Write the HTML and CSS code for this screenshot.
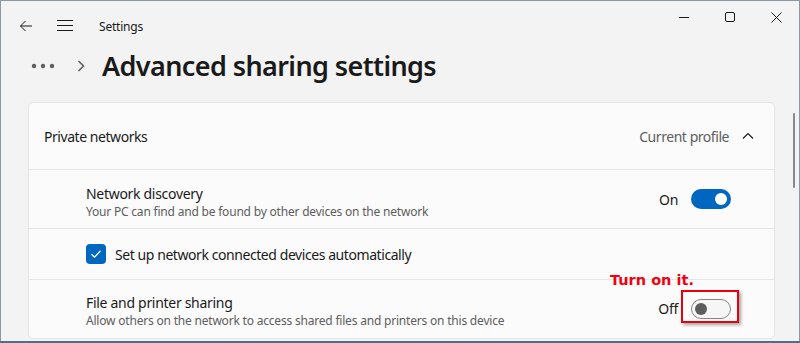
FILE: index.html
```html
<!DOCTYPE html>
<html lang="en">

<head>
    <meta charset="UTF-8">
    <meta name="viewport" content="width=device-width, initial-scale=1.0">
    <title>Settings</title>
    <link rel="stylesheet" href="styles.css">
</head>

<body>
    <div class="window">
        <header class="titlebar">
            <div class="nav">
                <svg class="nav-icon" width="16" height="16" viewBox="0 0 16 16">
                    <path d="M14 8H2.5M7.5 3L2.5 8l5 5" fill="none" stroke="#1a1a1a" stroke-width="1" />
                </svg>
                <svg class="nav-icon menu" width="16" height="12" viewBox="0 0 16 12">
                    <path d="M0 .5h16M0 5.5h16M0 10.5h16" fill="none" stroke="#1a1a1a" stroke-width="1" />
                </svg>
                <span class="app-name">Settings</span>
            </div>
            <div class="controls">
                <button class="ctrl">
                    <svg width="10" height="10" viewBox="0 0 10 10">
                        <path d="M0 5.5h10" stroke="#1a1a1a" stroke-width="1" />
                    </svg>
                </button>
                <button class="ctrl">
                    <svg width="10" height="10" viewBox="0 0 10 10">
                        <rect x=".5" y=".5" width="9" height="9" rx="1.5" fill="none" stroke="#1a1a1a" stroke-width="1" />
                    </svg>
                </button>
                <button class="ctrl">
                    <svg width="11" height="11" viewBox="0 0 11 11">
                        <path d="M.5.5l10 10M10.5.5l-10 10" stroke="#1a1a1a" stroke-width="1" />
                    </svg>
                </button>
            </div>
        </header>

        <div class="breadcrumb">
            <svg width="24" height="6" viewBox="0 0 24 6">
                <circle cx="3" cy="3" r="2.2" fill="#5f5f5f" />
                <circle cx="12" cy="3" r="2.2" fill="#5f5f5f" />
                <circle cx="21" cy="3" r="2.2" fill="#5f5f5f" />
            </svg>
            <svg class="crumb-chevron" width="8" height="12" viewBox="0 0 8 12">
                <path d="M1.5 1l5 5-5 5" fill="none" stroke="#5f5f5f" stroke-width="1.6" />
            </svg>
            <h1>Advanced sharing settings</h1>
        </div>

        <section class="card">
            <div class="card-header">
                <span class="header-title">Private networks</span>
                <span class="header-status">Current profile</span>
                <svg class="header-chevron" width="12" height="8" viewBox="0 0 12 8">
                    <path d="M1 6.5l5-5 5 5" fill="none" stroke="#1a1a1a" stroke-width="1.2" />
                </svg>
            </div>

            <div class="setting">
                <div class="setting-text">
                    <div class="setting-title">Network discovery</div>
                    <div class="setting-desc">Your PC can find and be found by other devices on the network</div>
                </div>
                <span class="state">On</span>
                <span class="toggle on"><span class="knob"></span></span>
            </div>

            <div class="setting check-row">
                <span class="checkbox">
                    <svg width="12" height="10" viewBox="0 0 12 10">
                        <path d="M1.5 5.2l3 3 6-6.5" fill="none" stroke="#fff" stroke-width="1.3" />
                    </svg>
                </span>
                <span class="check-label">Set up network connected devices automatically</span>
            </div>

            <div class="setting">
                <div class="setting-text">
                    <div class="setting-title">File and printer sharing</div>
                    <div class="setting-desc">Allow others on the network to access shared files and printers on this device</div>
                </div>
                <span class="state">Off</span>
                <span class="toggle-wrap">
                    <span class="note">Turn on it.</span>
                    <span class="toggle off"><span class="knob"></span></span>
                    <span class="highlight"></span>
                </span>
            </div>
        </section>

        <div class="scrollbar"></div>
    </div>
</body>

</html>
```

FILE: styles.css
```css
* {
    box-sizing: border-box;
    margin: 0;
    padding: 0;
}

body {
    width: 800px;
    height: 343px;
    overflow: hidden;
    background-color: #4f6f8c;
    font-family: "Noto Sans", "Open Sans", sans-serif;
    color: #1a1a1a;
}

.window {
    position: relative;
    height: 341px;
    background-color: #f3f3f3;
    border: 1px solid #8d9aa6;
    border-bottom: none;
    display: flex;
    flex-direction: column;
}

/* title bar */
.titlebar {
    height: 46px;
    display: flex;
    justify-content: space-between;
}

.nav {
    display: flex;
    align-items: center;
    padding-top: 4px;
    padding-left: 17px;
}

.nav-icon {
    display: block;
}

.menu {
    margin-left: 23px;
}

.app-name {
    margin-left: 26px;
    font-size: 12px;
    letter-spacing: -0.2px;
}

.controls {
    display: flex;
    height: 32px;
}

.ctrl {
    width: 46px;
    height: 32px;
    border: none;
    background: none;
    display: flex;
    align-items: center;
    justify-content: center;
}

/* breadcrumb */
.breadcrumb {
    height: 38px;
    display: flex;
    align-items: center;
    padding-left: 30px;
}

.crumb-chevron {
    margin-left: 22px;
}

.breadcrumb h1 {
    margin-left: 17px;
    font-size: 27px;
    font-weight: 600;
    letter-spacing: -0.6px;
    line-height: 38px;
    margin-top: -1px;
}

/* card */
.card {
    margin: 17px 24px 0 27px;
    background-color: #fbfbfb;
    border: 1px solid #e5e5e5;
    border-radius: 5px;
    flex: 1;
    margin-bottom: 2px;
}

.card-header {
    height: 67px;
    display: flex;
    align-items: center;
    padding: 0 20px 0 15px;
    border-bottom: 1px solid #e5e5e5;
    font-size: 14px;
}

.header-title {
    flex: 1;
    letter-spacing: -0.45px;
}

.header-status {
    color: #5d5d5d;
    letter-spacing: -0.45px;
}

.header-chevron {
    margin-left: 13px;
}

.setting {
    display: flex;
    align-items: center;
    padding: 0 43px 0 57px;
    height: 59px;
    border-bottom: 1px solid #e5e5e5;
}

.setting:last-child {
    border-bottom: none;
    height: 57px;
}

.setting-text {
    flex: 1;
    padding-top: 5px;
}

.setting-title {
    font-size: 14px;
    letter-spacing: -0.3px;
    line-height: 19px;
}

.setting-desc {
    font-size: 12px;
    color: #5d5d5d;
    letter-spacing: -0.2px;
    line-height: 17px;
}

.state {
    font-size: 14px;
    margin-right: 13px;
    margin-left: 10px;
    letter-spacing: -0.3px;
}

.toggle {
    display: flex;
    align-items: center;
    width: 40px;
    height: 20px;
    border-radius: 10px;
    padding: 0 4px;
}

.toggle .knob {
    width: 12px;
    height: 12px;
    border-radius: 50%;
}

.toggle.on {
    background-color: #0067c0;
    justify-content: flex-end;
}

.toggle.on .knob {
    background-color: #fff;
}

.toggle.off {
    background-color: #f6f6f6;
    border: 1px solid #858585;
    padding: 0 3px;
}

.toggle.off .knob {
    background-color: #5d5d5d;
}

.check-row {
    height: 51px;
}

.checkbox {
    width: 20px;
    height: 20px;
    border-radius: 4px;
    background-color: #0067c0;
    display: flex;
    align-items: center;
    justify-content: center;
}

.check-label {
    margin-left: 9px;
    font-size: 14px;
    letter-spacing: -0.43px;
}

/* callout around the off switch */
.toggle-wrap {
    position: relative;
}

.highlight {
    position: absolute;
    left: -10px;
    top: -9px;
    width: 58px;
    height: 33px;
    border: 2px solid #e8000b;
    box-shadow: 2px 2px 3px rgba(0, 0, 0, 0.35);
}

.note {
    position: absolute;
    left: -81px;
    top: -27px;
    white-space: nowrap;
    font-family: "DejaVu Sans", sans-serif;
    font-weight: bold;
    font-size: 14.5px;
    color: #f2000f;
}

.scrollbar {
    position: absolute;
    right: 4px;
    top: 112px;
    width: 2px;
    height: 75px;
    border-radius: 1px;
    background-color: #8a8a8a;
}
```
